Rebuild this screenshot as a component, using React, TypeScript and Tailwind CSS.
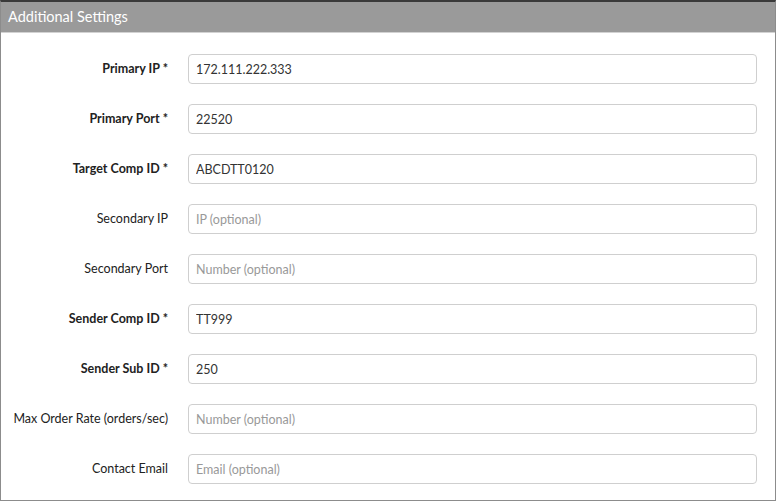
import React from 'react';

interface Field {
  label: string;
  required?: boolean;
  value?: string;
  placeholder?: string;
}

const fields: Field[] = [
  { label: 'Primary IP', required: true, value: '172.111.222.333' },
  { label: 'Primary Port', required: true, value: '22520' },
  { label: 'Target Comp ID', required: true, value: 'ABCDTT0120' },
  { label: 'Secondary IP', placeholder: 'IP (optional)' },
  { label: 'Secondary Port', placeholder: 'Number (optional)' },
  { label: 'Sender Comp ID', required: true, value: 'TT999' },
  { label: 'Sender Sub ID', required: true, value: '250' },
  { label: 'Max Order Rate (orders/sec)', placeholder: 'Number (optional)' },
  { label: 'Contact Email', placeholder: 'Email (optional)' },
];

const App: React.FC = () => {
  return (
    <div className="w-[776px] h-[501px] bg-white font-['Lato','Open_Sans',sans-serif]">
      <div className="h-full flex flex-col border-t-2 border-t-[#3a3a3a] border-x border-b border-[#8c8c8c]">
        {/* Header */}
        <div className="h-[31px] shrink-0 bg-[#9a9a9a] border-b border-[#d2d2d2] flex items-center px-[7px]">
          <span className="text-white text-[14.5px] leading-none">Additional Settings</span>
        </div>

        {/* Form */}
        <div className="flex flex-col gap-5 pt-[21px] pr-[18px]">
          {fields.map((f) => (
            <div key={f.label} className="flex items-center gap-5">
              <label
                className={
                  'w-[167px] shrink-0 text-right text-[12.5px] text-[#222] ' +
                  (f.required ? 'font-bold' : 'font-normal')
                }
              >
                {f.label}
                {f.required && ' *'}
              </label>
              <input
                readOnly
                defaultValue={f.value}
                placeholder={f.placeholder}
                className="flex-1 h-[30px] rounded-[4px] border border-[#cfcfcf] bg-white px-[7px] text-[12.5px] text-[#333] placeholder:text-[#999] outline-none"
              />
            </div>
          ))}
        </div>
      </div>
    </div>
  );
};

export default App;
